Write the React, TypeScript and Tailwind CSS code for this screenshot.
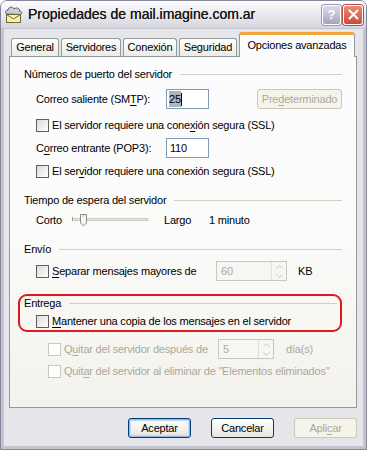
import React from "react";

const font = { fontFamily: '"Liberation Sans", Arial, sans-serif' };

function U({ children }: { children: React.ReactNode }) {
  return <span className="underline underline-offset-[2px]">{children}</span>;
}

function Check({ disabled = false }: { disabled?: boolean }) {
  return (
    <div
      className={`w-[13px] h-[13px] shrink-0 border ${
        disabled
          ? "border-[#cac8bb] bg-white"
          : "border-[#5a5f66] bg-gradient-to-br from-[#dcdcd6] to-white"
      }`}
    />
  );
}

function GroupHeader({ title, className = "" }: { title: string; className?: string }) {
  return (
    <div className={`flex items-center h-[14px] gap-[8px] ${className}`}>
      <span className="whitespace-nowrap">{title}</span>
      <div className="flex-1 h-px bg-[#d0d0c8]" />
    </div>
  );
}

function Spin({ value, width }: { value: string; width: string }) {
  return (
    <div className={`${width} h-[20px] border border-[#c9c7ba] bg-[#f7f6f2] flex items-center`}>
      <span className="flex-1 pl-[4px] text-[#aca899]">{value}</span>
      <div className="w-[15px] h-full flex flex-col border-l border-[#e4e2d8]">
        <div className="flex-1 flex items-center justify-center">
          <svg width="7" height="4" viewBox="0 0 7 4">
            <path d="M0.5 3.5 L3.5 0.5 L6.5 3.5" fill="none" stroke="#c8c6bc" strokeWidth="1" />
          </svg>
        </div>
        <div className="flex-1 flex items-center justify-center">
          <svg width="7" height="4" viewBox="0 0 7 4">
            <path d="M0.5 0.5 L3.5 3.5 L6.5 0.5" fill="none" stroke="#c8c6bc" strokeWidth="1" />
          </svg>
        </div>
      </div>
    </div>
  );
}

function Tab({ label, width }: { label: string; width: string }) {
  return (
    <div
      className={`${width} h-[18px] flex items-center justify-center border border-b-0 border-[#919b9c] rounded-t-[3px] bg-gradient-to-b from-white to-[#ecebe6]`}
    >
      {label}
    </div>
  );
}

function XPButton({
  children,
  isDefault = false,
  disabled = false,
}: {
  children: React.ReactNode;
  isDefault?: boolean;
  disabled?: boolean;
}) {
  return (
    <div
      className={`w-[63px] h-[20px] flex items-center justify-center rounded-[3px] border ${
        disabled
          ? "border-[#c9c7ba] text-[#aca899] bg-[#f5f4ea]"
          : "border-[#003c74] bg-gradient-to-b from-white to-[#e6e5e0]"
      } ${isDefault ? "shadow-[inset_0_0_0_1px_#98b8ea,inset_0_0_0_2px_#c6d8f4]" : ""}`}
    >
      {children}
    </div>
  );
}

function MailIcon() {
  return (
    <svg width="20" height="18" viewBox="0 0 20 18">
      <path
        d="M3 8 C1 8 1 4 4 4 C4 1 9 0 10 3 C12 1 16 2 15.5 5 C18 5 18.5 8 16 8.5 Z"
        fill="#c9cdd6"
        stroke="#555b66"
        strokeWidth="1"
      />
      <rect x="2.5" y="8.5" width="14" height="8" fill="#fbf0a8" stroke="#6b6a3c" strokeWidth="1" />
      <path d="M2.5 8.5 L9.5 13 L16.5 8.5" fill="none" stroke="#6b6a3c" strokeWidth="1" />
    </svg>
  );
}

export default function App() {
  return (
    <div
      className="w-[367px] h-[450px] flex flex-col bg-[#e6e5ea] border border-[#85859a] rounded-t-[7px] overflow-hidden text-[11px] tracking-[-0.2px] text-black"
      style={font}
    >
      {/* Title bar */}
      <div className="h-[28px] shrink-0 flex items-center pl-[3px] pr-[3px] bg-gradient-to-b from-[#fdfdfe] via-[#e9e9ee] to-[#d6d6de] border-b border-[#c3c3cc]">
        <MailIcon />
        <span className="ml-[4px] text-[14px] tracking-normal text-[#1a1a1a] [text-shadow:0_0_0.4px_#1a1a1a]">
          Propiedades de mail.imagine.com.ar
        </span>
        <div className="ml-auto flex gap-[2px]">
          <div className="w-[19px] h-[20px] rounded-[3px] border border-white bg-gradient-to-b from-[#dcdce8] to-[#a4a4c0] flex items-center justify-center shadow-[0_0_0_1px_#9a9aae]">
            <span className="text-white text-[13px] font-bold tracking-normal">?</span>
          </div>
          <div className="w-[20px] h-[20px] rounded-[3px] border border-white bg-gradient-to-b from-[#ec8a78] to-[#cf4a36] flex items-center justify-center shadow-[0_0_0_1px_#b0503e]">
            <svg width="11" height="11" viewBox="0 0 11 11">
              <path d="M1.5 1.5 L9.5 9.5 M9.5 1.5 L1.5 9.5" stroke="white" strokeWidth="2" strokeLinecap="round" />
            </svg>
          </div>
        </div>
      </div>

      {/* Body */}
      <div className="flex-1 flex flex-col border-x-[3px] border-b-[3px] border-[#c4c4d0] pl-[5px] pr-[6px]">
        {/* Tabs */}
        <div className="mt-[3px] h-[24px] flex items-end pl-[2px] gap-[2px]">
          <Tab label="General" width="w-[48px]" />
          <Tab label="Servidores" width="w-[60px]" />
          <Tab label="Conexión" width="w-[54px]" />
          <Tab label="Seguridad" width="w-[58px]" />
          <div className="relative z-10 -mb-px w-[116px] h-[25px] flex items-center justify-center bg-[#fcfcfe] border-x border-[#919b9c] rounded-t-[3px] border-t-[3px] border-t-[#f0a63c] pb-[2px]">
            Opciones avanzadas
          </div>
        </div>

        {/* Panel */}
        <div className="h-[352px] border border-[#919b9c] bg-gradient-to-b from-[#fcfcfe] via-[#fbfbfa] to-[#f3f2ec] px-[14px] flex flex-col">
          <GroupHeader title="Números de puerto del servidor" className="mt-[10px]" />

          <div className="mt-[8px] h-[20px] flex items-center ml-[12px]">
            <span className="w-[130px]">
              Correo saliente (SM<U>T</U>P):
            </span>
            <div className="w-[43px] h-[20px] border border-[#7f9db9] bg-white flex items-center pl-[2px]">
              <span className="bg-[#aeb4c0]">25</span>
              <span className="w-px h-[13px] bg-black" />
            </div>
            <div className="ml-auto w-[85px] h-[20px] rounded-[3px] border border-[#c9c7ba] bg-[#f5f4ea] text-[#aca899] flex items-center justify-center">
              Pre<U>d</U>eterminado
            </div>
          </div>

          <div className="mt-[10px] h-[13px] flex items-center gap-[3px] ml-[12px]">
            <Check />
            <span>
              El servidor requiere una cone<U>x</U>ión segura (SSL)
            </span>
          </div>

          <div className="mt-[6px] h-[20px] flex items-center ml-[12px]">
            <span className="w-[130px]">
              C<U>o</U>rreo entrante (POP3):
            </span>
            <div className="w-[43px] h-[20px] border border-[#7f9db9] bg-white flex items-center pl-[3px]">
              110
            </div>
          </div>

          <div className="mt-[7px] h-[13px] flex items-center gap-[3px] ml-[12px]">
            <Check />
            <span>
              El ser<U>v</U>idor requiere una conexión segura (SSL)
            </span>
          </div>

          <GroupHeader title="Tiempo de espera del servidor" className="mt-[15px]" />

          <div className="mt-[5px] h-[16px] flex items-center ml-[12px]">
            <span className="w-[36px]">Corto</span>
            <svg width="78" height="16" viewBox="0 0 78 16" className="shrink-0">
              <line x1="0.5" y1="5" x2="0.5" y2="9" stroke="#9a9a94" />
              <rect x="2" y="6.5" width="74" height="2" fill="#e4e3dc" stroke="#b8b7ae" strokeWidth="0.6" />
              <path
                d="M8.5 2.5 H14.5 V11 L11.5 14 L8.5 11 Z"
                fill="#f4f4f0"
                stroke="#8f8f88"
                strokeWidth="1"
              />
              <line x1="10" y1="4" x2="13" y2="4" stroke="#c8c8c0" />
            </svg>
            <span className="ml-[14px] w-[45px]">Largo</span>
            <span>1 minuto</span>
          </div>

          <GroupHeader title="Envío" className="mt-[14px]" />

          <div className="mt-[5px] h-[20px] flex items-center ml-[12px]">
            <Check />
            <span className="ml-[3px] w-[164px]">
              <U>S</U>eparar mensajes mayores de
            </span>
            <Spin value="60" width="w-[71px]" />
            <span className="ml-[11px]">KB</span>
          </div>

          <div className="mt-[13px] -ml-[6px] h-[38px] border-2 border-[#e0191e] rounded-[9px] pl-[4px] pr-[3px] flex flex-col">
            <GroupHeader title="Entrega" className="mt-[0px]" />
            <div className="mt-[5px] h-[13px] flex items-center gap-[3px] ml-[12px]">
              <Check />
              <span>
                <U>M</U>antener una copia de los mensajes en el servidor
              </span>
            </div>
          </div>

          <div className="mt-[7px] h-[20px] flex items-center ml-[24px] text-[#aca899]">
            <Check disabled />
            <span className="ml-[3px] w-[154px]">
              Q<U>u</U>itar del servidor después de
            </span>
            <Spin value="5" width="w-[56px]" />
            <span className="ml-[12px]">día(s)</span>
          </div>

          <div className="mt-[6px] h-[13px] flex items-center gap-[3px] ml-[24px] text-[#aca899]">
            <Check disabled />
            <span>
              Quit<U>a</U>r del servidor al eliminar de "Elementos eliminados"
            </span>
          </div>
        </div>

        {/* Buttons */}
        <div className="mt-[10px] flex justify-end gap-[20px]">
          <XPButton isDefault>Aceptar</XPButton>
          <XPButton>Cancelar</XPButton>
          <XPButton disabled>
            Apli<U>c</U>ar
          </XPButton>
        </div>
      </div>
    </div>
  );
}
